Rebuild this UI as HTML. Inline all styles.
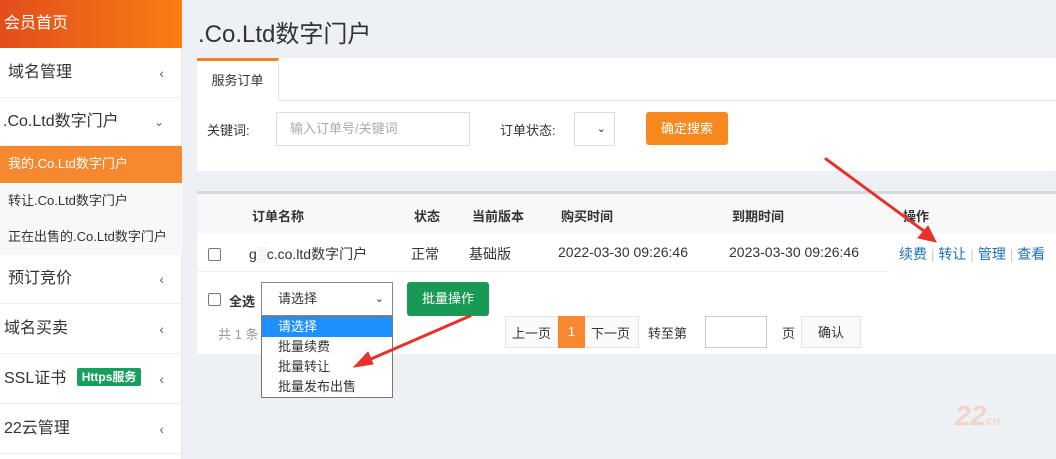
<!DOCTYPE html>
<html><head><meta charset="utf-8"><style>
*{margin:0;padding:0;box-sizing:border-box}
body{width:1056px;height:459px;overflow:hidden;background:#edf0f5;font-family:"Liberation Sans","Noto Sans CJK SC",sans-serif;font-size:14px;color:#333;position:relative}
.abs{position:absolute}
.side{left:0;top:0;width:182px;height:459px;background:#fff;border-right:1px solid #e2e4e8}
.top{left:0;top:0;width:182px;height:48px;background:linear-gradient(90deg,#e24e1c,#fa7d12);color:#fff;font-size:16px;line-height:48px;padding-left:4px}
.it{left:0;width:182px;height:50px;border-bottom:1px solid #eceef1;font-size:16px;line-height:50px;color:#333}
.it .ch{position:absolute;right:18px;top:0;color:#666;font-size:14px}
.sub{left:0;width:182px;height:36px;line-height:36px;font-size:13px;padding-left:8px;background:#f7f8fa}
.th{font-weight:bold;font-size:13px;color:#333}
.cb{width:13px;height:13px;border:1px solid #777;border-radius:2px;background:#fff}
a{color:#1f6fb5;text-decoration:none}
</style></head><body>
<div class="abs side"></div>
<div class="abs top">会员首页</div>
<div class="abs it" style="top:48px;padding-left:8px">域名管理<span class="ch">‹</span></div>
<div class="abs it" style="top:97px;padding-left:3px;height:49px">.Co.Ltd数字门户<span class="ch" style="font-size:12px">⌄</span></div>
<div class="abs sub" style="top:146px;height:37px;background:#f6892f;color:#fff">我的.Co.Ltd数字门户</div>
<div class="abs sub" style="top:183px">转让.Co.Ltd数字门户</div>
<div class="abs sub" style="top:219px">正在出售的.Co.Ltd数字门户</div>
<div class="abs it" style="top:254px;padding-left:8px">预订竞价<span class="ch">‹</span></div>
<div class="abs it" style="top:304px;padding-left:4px">域名买卖<span class="ch">‹</span></div>
<div class="abs it" style="top:354px;padding-left:4px">SSL证书 <span style="display:inline-block;background:#17a05d;color:#fff;font-size:12px;font-weight:bold;line-height:18px;padding:0 5px;border-radius:2px;margin-left:6px;vertical-align:2px">Https服务</span><span class="ch">‹</span></div>
<div class="abs it" style="top:404px;padding-left:4px">22云管理<span class="ch">‹</span></div>

<div class="abs" style="left:198px;top:14px;font-size:24px;color:#333">.Co.Ltd数字门户</div>
<div class="abs" style="left:197px;top:58px;width:859px;height:113px;background:#fff;border-radius:2px"></div>
<div class="abs" style="left:197px;top:100px;width:859px;height:1px;background:#e6e6e6"></div>
<div class="abs" style="left:197px;top:58px;width:82px;height:43px;background:#fff;border-top:3px solid #f08326;border-right:1px solid #e6e6e6;font-size:13px;text-align:center;line-height:40px">服务订单</div>
<div class="abs" style="left:207px;top:120px;font-size:13px">关键词:</div>
<div class="abs" style="left:276px;top:112px;width:194px;height:34px;border:1px solid #ddd;font-size:13px;color:#aaa;line-height:32px;padding-left:13px">输入订单号/关键词</div>
<div class="abs" style="left:500px;top:120px;font-size:13px">订单状态:</div>
<div class="abs" style="left:574px;top:112px;width:41px;height:34px;border:1px solid #ddd;font-size:11px;line-height:32px;text-align:right;padding-right:8px">⌄</div>
<div class="abs" style="left:646px;top:112px;width:82px;height:33px;background:#f7891f;border-radius:3px;color:#fff;font-size:13px;text-align:center;line-height:33px">确定搜索</div>

<div class="abs" style="left:197px;top:191px;width:859px;height:163px;background:#fff;border-top:3px solid #d6d9df"></div>
<div class="abs" style="left:197px;top:194px;width:859px;height:40px;background:#f8f8f8"></div>
<div class="abs" style="left:197px;top:271px;width:690px;height:1px;background:#eee"></div>
<div class="abs th" style="left:252px;top:206px">订单名称</div>
<div class="abs th" style="left:414px;top:206px">状态</div>
<div class="abs th" style="left:472px;top:206px">当前版本</div>
<div class="abs th" style="left:561px;top:206px">购买时间</div>
<div class="abs th" style="left:732px;top:206px">到期时间</div>
<div class="abs th" style="left:903px;top:206px">操作</div>
<div class="abs cb" style="left:208px;top:248px"></div>
<div class="abs" style="left:249px;top:244px">g<span style="color:#ddd">▒</span>c.co.ltd数字门户</div>
<div class="abs" style="left:411px;top:244px">正常</div>
<div class="abs" style="left:469px;top:244px">基础版</div>
<div class="abs" style="left:558px;top:244px">2022-03-30 09:26:46</div>
<div class="abs" style="left:729px;top:244px">2023-03-30 09:26:46</div>
<div class="abs" style="left:899px;top:244px"><a>续费</a><span style="color:#ccc"> | </span><a>转让</a><span style="color:#ccc"> | </span><a>管理</a><span style="color:#ccc"> | </span><a>查看</a></div>

<div class="abs cb" style="left:208px;top:293px"></div>
<div class="abs th" style="left:229px;top:291px">全选</div>
<div class="abs" style="left:218px;top:324px;color:#999;font-size:13px">共 1 条</div>
<div class="abs" style="left:261px;top:282px;width:132px;height:34px;border:1px solid #888;background:#fff;font-size:13px;line-height:32px;padding-left:16px">请选择<span style="position:absolute;right:8px;font-size:11px">⌄</span></div>
<div class="abs" style="left:407px;top:282px;width:82px;height:34px;background:#189a55;border-radius:3px;color:#fff;font-size:13px;text-align:center;line-height:34px">批量操作</div>
<div class="abs" style="left:261px;top:316px;width:132px;height:82px;border:1px solid #777;background:#fff;font-size:13px;line-height:20px">
<div style="background:#1e90ff;color:#fff;padding-left:16px">请选择</div>
<div style="padding-left:16px">批量续费</div><div style="padding-left:16px">批量转让</div><div style="padding-left:16px">批量发布出售</div></div>
<div class="abs" style="left:505px;top:316px;width:134px;height:32px;border:1px solid #e2e2e2;background:#fafafa"></div>
<div class="abs" style="left:512px;top:323px;font-size:13px">上一页</div>
<div class="abs" style="left:558px;top:316px;width:27px;height:32px;background:#f6892f;color:#fff;text-align:center;line-height:32px;font-size:13px">1</div>
<div class="abs" style="left:591px;top:323px;font-size:13px">下一页</div>
<div class="abs" style="left:648px;top:323px;font-size:13px">转至第</div>
<div class="abs" style="left:705px;top:316px;width:62px;height:32px;border:1px solid #ccc"></div>
<div class="abs" style="left:782px;top:323px;font-size:13px">页</div>
<div class="abs" style="left:801px;top:316px;width:60px;height:32px;border:1px solid #e2e2e2;background:#fafafa;text-align:center;line-height:32px;font-size:13px">确认</div>
<div class="abs" style="left:955px;top:400px;font-size:28px;font-weight:bold;color:#f3d3c4;font-style:italic">22<span style="font-size:12px">cn</span></div>
<svg class="abs" style="left:0;top:0" width="1056" height="459">
<g fill="#e8312b" stroke="#e8312b" stroke-width="3" stroke-linecap="round">
<line x1="826" y1="159" x2="928" y2="234"/><polygon points="936,242 918,238 928,226" stroke-width="1"/>
<line x1="470" y1="316" x2="364" y2="362"/><polygon points="354,367 368,352 373,364" stroke-width="1"/>
</g></svg>
</body></html>
